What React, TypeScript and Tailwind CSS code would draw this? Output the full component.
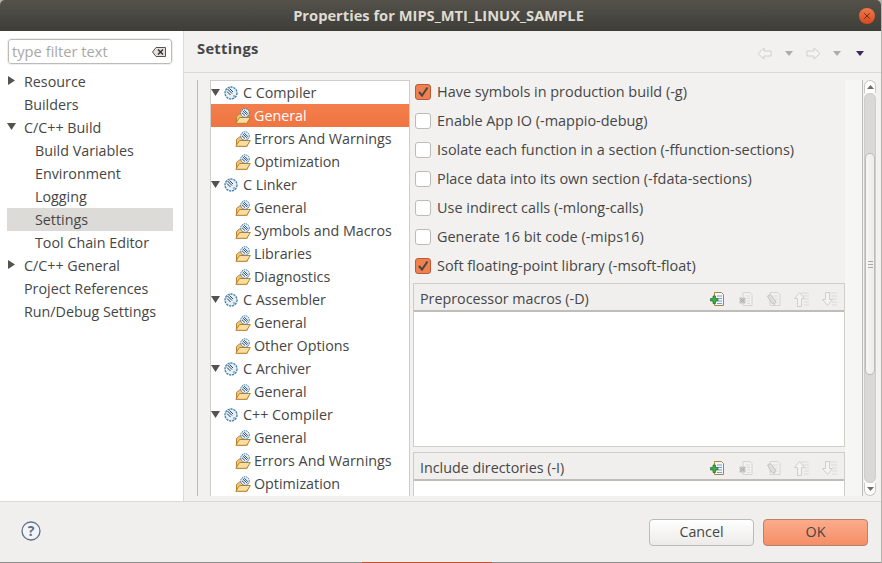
import React from 'react';
import { X } from 'lucide-react';

const font = "font-['Open_Sans',sans-serif]";

const navItems = [
  { label: 'Resource', level: 0, arrow: 'right' },
  { label: 'Builders', level: 0 },
  { label: 'C/C++ Build', level: 0, arrow: 'down' },
  { label: 'Build Variables', level: 1 },
  { label: 'Environment', level: 1 },
  { label: 'Logging', level: 1 },
  { label: 'Settings', level: 1, selected: true },
  { label: 'Tool Chain Editor', level: 1 },
  { label: 'C/C++ General', level: 0, arrow: 'right' },
  { label: 'Project References', level: 0 },
  { label: 'Run/Debug Settings', level: 0 },
];

const toolTree = [
  { label: 'C Compiler', tool: true },
  { label: 'General', selected: true },
  { label: 'Errors And Warnings' },
  { label: 'Optimization' },
  { label: 'C Linker', tool: true },
  { label: 'General' },
  { label: 'Symbols and Macros' },
  { label: 'Libraries' },
  { label: 'Diagnostics' },
  { label: 'C Assembler', tool: true },
  { label: 'General' },
  { label: 'Other Options' },
  { label: 'C Archiver', tool: true },
  { label: 'General' },
  { label: 'C++ Compiler', tool: true },
  { label: 'General' },
  { label: 'Errors And Warnings' },
  { label: 'Optimization' },
];

const options = [
  { label: 'Have symbols in production build (-g)', checked: true },
  { label: 'Enable App IO (-mappio-debug)' },
  { label: 'Isolate each function in a section (-ffunction-sections)' },
  { label: 'Place data into its own section (-fdata-sections)' },
  { label: 'Use indirect calls (-mlong-calls)' },
  { label: 'Generate 16 bit code (-mips16)' },
  { label: 'Soft floating-point library (-msoft-float)', checked: true },
];

const Arrow = ({ dir }: { dir: string }) => (
  <svg width="9" height="9" viewBox="0 0 9 9" className="shrink-0">
    {dir === 'down' ? <path d="M0 1h9L4.500 8z" fill="#55534e" /> : <path d="M1 0l7 4.500L1 9z" fill="#55534e" />}
  </svg>
);

const GearBall = () => (
  <svg width="14" height="14" viewBox="0 0 14 14" className="shrink-0">
    <circle cx="7" cy="7" r="6" fill="#e6f0f8" stroke="#3f7ea8" strokeWidth="1.300" strokeDasharray="2.200 0.800" />
    <path d="M3.500 3l4.500 4.500M5.500 2.500l3.500 3.500M3 5.500l3.500 3.500" stroke="#2b3f55" strokeWidth="1" />
    <circle cx="10" cy="10" r="0.800" fill="#3f7ea8" />
  </svg>
);

const FolderGear = () => (
  <svg width="16" height="16" viewBox="0 0 16 16" className="shrink-0">
    <path d="M1.500 15V8.500l3-2.500h3v3h5v6z" fill="#f3c77e" stroke="#b8812c" />
    <path d="M.8 15.300L4.500 9.500h10.800l-3.500 5.800z" fill="#fcdc9f" stroke="#b8812c" strokeLinejoin="round" />
    <circle cx="10" cy="5" r="4.300" fill="#e6f0f8" stroke="#3f7ea8" strokeWidth="1" strokeDasharray="1.600 0.700" />
    <path d="M7.600 2.800l4.800 4.400M9.200 2.200l3.600 3.400M7 4.800l3 2.800" stroke="#2b3f55" strokeWidth="0.900" />
  </svg>
);

const NavArrow = ({ flip }: { flip?: boolean }) => (
  <svg width="15" height="13" viewBox="0 0 15 13" className={flip ? 'shrink-0 -scale-x-100' : 'shrink-0'}>
    <path d="M1 6.500L7 1v3h7v5H7v3z" fill="#f4f3f2" stroke="#cfcecb" strokeLinejoin="round" />
  </svg>
);

const SmallDown = ({ color = '#aeadaa' }: { color?: string }) => (
  <svg width="8" height="5" viewBox="0 0 8 5" className="shrink-0">
    <path d="M0 0h8L4 5z" fill={color} />
  </svg>
);

const AddDoc = () => (
  <svg width="16" height="16" viewBox="0 0 16 16">
    <path d="M4.500 1.500h7l2 2v11h-9z" fill="#f3f6fb" stroke="#a5883f" />
    <path d="M7 5h5M8 7.500h4M8 10h4M7 12.500h5" stroke="#7f9cc6" />
    <path d="M3 5h2.500v2.500H8V10H5.500v2.500H3V10H.5V7.500H3z" fill="#3fae49" stroke="#1c6b2a" strokeWidth="0.700" />
  </svg>
);

const DeleteDoc = () => (
  <svg width="16" height="16" viewBox="0 0 16 16">
    <path d="M5 1.500h7l2 2v11H5z" fill="#f2f1ef" stroke="#d5d4d1" />
    <path d="M8 5h4M9 7.500h3M9 10h3M9 12.500h3" stroke="#dcdbd8" />
    <path d="M1.500 6.500h6v6h-6z" fill="#c9c7c6" />
    <path d="M2.500 7.500l4 4M6.500 7.500l-4 4" stroke="#aeacab" />
  </svg>
);

const EditDoc = () => (
  <svg width="16" height="16" viewBox="0 0 16 16">
    <path d="M4 1.500h8l2 2v11H4z" fill="#f2f1ef" stroke="#d5d4d1" />
    <path d="M7 5h5M9 8h3M10 11h2" stroke="#dcdbd8" />
    <path d="M1.500 5l3-1.500 5 6.500-1 3.500-3-1.500z" fill="#e0dfdc" stroke="#c4c3c0" />
  </svg>
);

const MoveDoc = ({ down }: { down?: boolean }) => (
  <svg width="16" height="17" viewBox="0 0 16 17">
    <path d="M7 2h8M9 5h6M10 8h5M10 11h5M10 14h5" stroke="#dcdbd8" />
    <path
      d={down ? 'M3.500 1.500h4v7h3l-5 6-5-6h3z' : 'M5.500 1.500l5 6h-3v8h-4v-8h-3z'}
      fill="#f4f3f2"
      stroke="#cfcecb"
    />
  </svg>
);

const ListGroup = ({ title, tall }: { title: string; tall?: boolean }) => (
  <div className={`flex shrink-0 flex-col border border-[#cfcdc9] ${tall ? 'h-[164px]' : 'h-[80px]'}`}>
    <div className="flex h-[28px] shrink-0 items-center border-b-2 border-[#bfbdb8] bg-[#f0efee] pt-[4px] pl-[6px]">
      <span>{title}</span>
      <div className="ml-auto flex w-[140px] items-center">
        <div className="flex w-[28px] justify-center"><AddDoc /></div>
        <div className="flex w-[28px] justify-center"><DeleteDoc /></div>
        <div className="flex w-[28px] justify-center"><EditDoc /></div>
        <div className="flex w-[28px] justify-center"><MoveDoc /></div>
        <div className="flex w-[28px] justify-center"><MoveDoc down /></div>
      </div>
    </div>
    <div className="flex-1 bg-white" />
  </div>
);

const Scrollbar = () => (
  <div className="flex w-[15px] shrink-0 flex-col border-l border-[#bdbbb7] bg-[#f4f3f2] px-px">
    <div className="flex h-[13px] shrink-0 items-center justify-center rounded-t-full border border-b-0 border-[#c8c6c2] bg-white">
      <svg width="7" height="4" viewBox="0 0 7 4"><path d="M0 4L3.500 0 7 4z" fill="#6e6d69" /></svg>
    </div>
    <div className="min-h-0 flex-1 rounded-[6px] border border-[#cfcdc9] bg-[#d9d8d5] pt-[59px]">
      <div className="flex h-[222px] flex-col items-center justify-center gap-[2px] rounded-full border border-[#bdbbb7] bg-gradient-to-r from-[#f6f6f5] to-[#eeedeb]">
        <div className="h-px w-[5px] bg-[#a9a8a5]" />
        <div className="h-px w-[5px] bg-[#a9a8a5]" />
        <div className="h-px w-[5px] bg-[#a9a8a5]" />
      </div>
    </div>
    <div className="flex h-[13px] shrink-0 items-center justify-center rounded-b-full border border-t-0 border-[#c8c6c2] bg-white">
      <svg width="7" height="4" viewBox="0 0 7 4"><path d="M0 0L3.500 4 7 0z" fill="#6e6d69" /></svg>
    </div>
  </div>
);

export default function App() {
  return (
    <div className={`${font} flex h-[563px] w-[882px] flex-col overflow-hidden border-r border-[#b5b4b0] bg-[#b5b4b0] text-[14.3px]`}>
      {/* Title bar */}
      <div className="relative flex h-[31px] shrink-0 items-center justify-center rounded-t-[5px] bg-gradient-to-b from-[#54524b] to-[#3e3d38] pr-[4px]">
        <span className="text-[14.7px] font-bold text-[#dfdbd2]">Properties for MIPS_MTI_LINUX_SAMPLE</span>
        <div className="absolute top-[8px] right-[6px] flex h-[16px] w-[16px] items-center justify-center rounded-full bg-gradient-to-b from-[#f0784a] to-[#d8481c]">
          <X size={10} strokeWidth={2} className="text-[#4d2a1a]" />
        </div>
      </div>

      <div className="flex h-[470px] shrink-0 bg-[#f2f1f0] text-[#464646]">
        {/* Left navigation */}
        <div className="flex w-[184px] shrink-0 flex-col border-r border-[#dad9d6] bg-white">
          <div className="mt-[8px] ml-[8px] flex h-[25px] w-[164px] items-center rounded-[3px] border border-[#bdbbb7] pr-[5px] pl-[3px] outline outline-1 outline-[#eeeeec]">
            <span className="text-[14.7px] text-[#a9a8a5]">type filter text</span>
            <svg width="14" height="10" viewBox="0 0 14 10" className="ml-auto">
              <path d="M.5 5L4 .5h9.500v9H4z" fill="#e3e2e0" stroke="#55534e" />
              <path d="M6 2.500l5 5M11 2.500l-5 5" stroke="#33322f" strokeWidth="1.500" />
            </svg>
          </div>
          <div className="mt-[6px] flex flex-col">
            {navItems.map((item) => (
              <div
                key={item.label}
                className={`ml-[7px] flex h-[23px] w-[166px] items-center ${item.selected ? 'bg-[#dcdbd8]' : ''}`}
              >
                <div className="flex w-[17px] shrink-0 justify-start pb-[2px]">
                  {item.arrow && <Arrow dir={item.arrow} />}
                </div>
                <span className={item.level === 1 ? 'pl-[11px]' : ''}>{item.label}</span>
              </div>
            ))}
          </div>
        </div>

        {/* Settings page */}
        <div className="flex min-w-0 flex-1 flex-col">
          <div className="flex h-[42px] shrink-0 items-center border-b border-[#dad9d6] pr-[17px] pl-[13px]">
            <span className="mb-[7px] text-[14.7px] font-bold tracking-[0.3px]">Settings</span>
            <div className="mt-[3px] ml-auto flex items-center">
              <NavArrow />
              <div className="ml-[13px]"><SmallDown /></div>
              <div className="ml-[13px]"><NavArrow flip /></div>
              <div className="ml-[12px]"><SmallDown /></div>
              <div className="ml-[15px]"><SmallDown color="#3b2a5c" /></div>
            </div>
          </div>

          <div className="flex min-h-0 flex-1 pt-[7px] pr-[4px] pb-[5px] pl-[13px]">
            <div className="flex min-w-0 flex-1 overflow-hidden border-l border-[#bdbbb7] pl-[12px]">
              {/* Tool settings tree */}
              <div className="h-full w-[200px] shrink-0 overflow-hidden border-x border-t border-[#cfcdc9] bg-white">
                {toolTree.map((row, i) => (
                  <div
                    key={i}
                    className={`flex h-[23px] items-center ${row.selected ? 'bg-gradient-to-b from-[#f37f4d] to-[#ef7440] text-white' : ''}`}
                  >
                    {row.tool ? (
                      <div className="flex items-center">
                        <div className="w-[13px]"><Arrow dir="down" /></div>
                        <GearBall />
                        <span className="ml-[5px]">{row.label}</span>
                      </div>
                    ) : (
                      <div className="flex items-center pl-[24px]">
                        <FolderGear />
                        <span className="ml-[3px]">{row.label}</span>
                      </div>
                    )}
                  </div>
                ))}
              </div>

              {/* Options */}
              <div className="ml-[3px] flex w-[432px] shrink-0 flex-col overflow-hidden">
                <div className="-mt-[3px] flex shrink-0 flex-col pb-[3px] text-[14.45px]">
                  {options.map((opt) => (
                    <div key={opt.label} className="flex h-[29px] items-center">
                      <div
                        className={`ml-[2px] flex h-[16px] w-[16px] shrink-0 items-center justify-center rounded-[3px] border ${opt.checked ? 'border-[#b95b35] bg-[#f08050]' : 'border-[#bdbbb7] bg-white'}`}
                      >
                        {opt.checked && (
                          <svg width="12" height="12" viewBox="0 0 12 12">
                            <path d="M2 6l3 3.500L10.500 1.500" fill="none" stroke="#4a4742" strokeWidth="2" />
                          </svg>
                        )}
                      </div>
                      <span className="ml-[6px] whitespace-nowrap">{opt.label}</span>
                    </div>
                  ))}
                </div>
                <ListGroup title="Preprocessor macros (-D)" tall />
                <div className="mt-[5px] shrink-0">
                  <ListGroup title="Include directories (-I)" />
                </div>
              </div>
              <div className="flex-1 bg-[#f6f6f5]" />
            </div>
            <Scrollbar />
          </div>
        </div>
      </div>

      {/* Footer */}
      <div className="flex h-[61px] shrink-0 items-center border-t border-[#dad9d6] bg-[#f0efee] pr-[13px] pl-[21px]">
        <svg width="20" height="20" viewBox="0 0 20 20" className="mb-[3px]">
          <circle cx="10" cy="10" r="9" fill="#f4f4f4" stroke="#5f6f8c" strokeWidth="1.300" />
          <text x="10" y="15" textAnchor="middle" fontSize="14" fontWeight="700" fill="#5f6f8c" fontFamily="Open Sans">?</text>
        </svg>
        <button className="ml-auto h-[27px] w-[105px] rounded-[4px] border border-[#bdbbb7] bg-gradient-to-b from-white to-[#ecebe9] text-[#464646]">
          Cancel
        </button>
        <button className="ml-[9px] h-[27px] w-[105px] rounded-[4px] border border-[#b5836c] bg-gradient-to-b from-[#fbab8b] to-[#f58e67] text-[#464646]">
          OK
        </button>
      </div>
      <div className="flex h-px shrink-0">
        <div className="w-[362px] bg-[#8f8e8a]" />
        <div className="w-[130px] bg-[#c2502a]" />
        <div className="flex-1 bg-[#8f8e8a]" />
      </div>
    </div>
  );
}
